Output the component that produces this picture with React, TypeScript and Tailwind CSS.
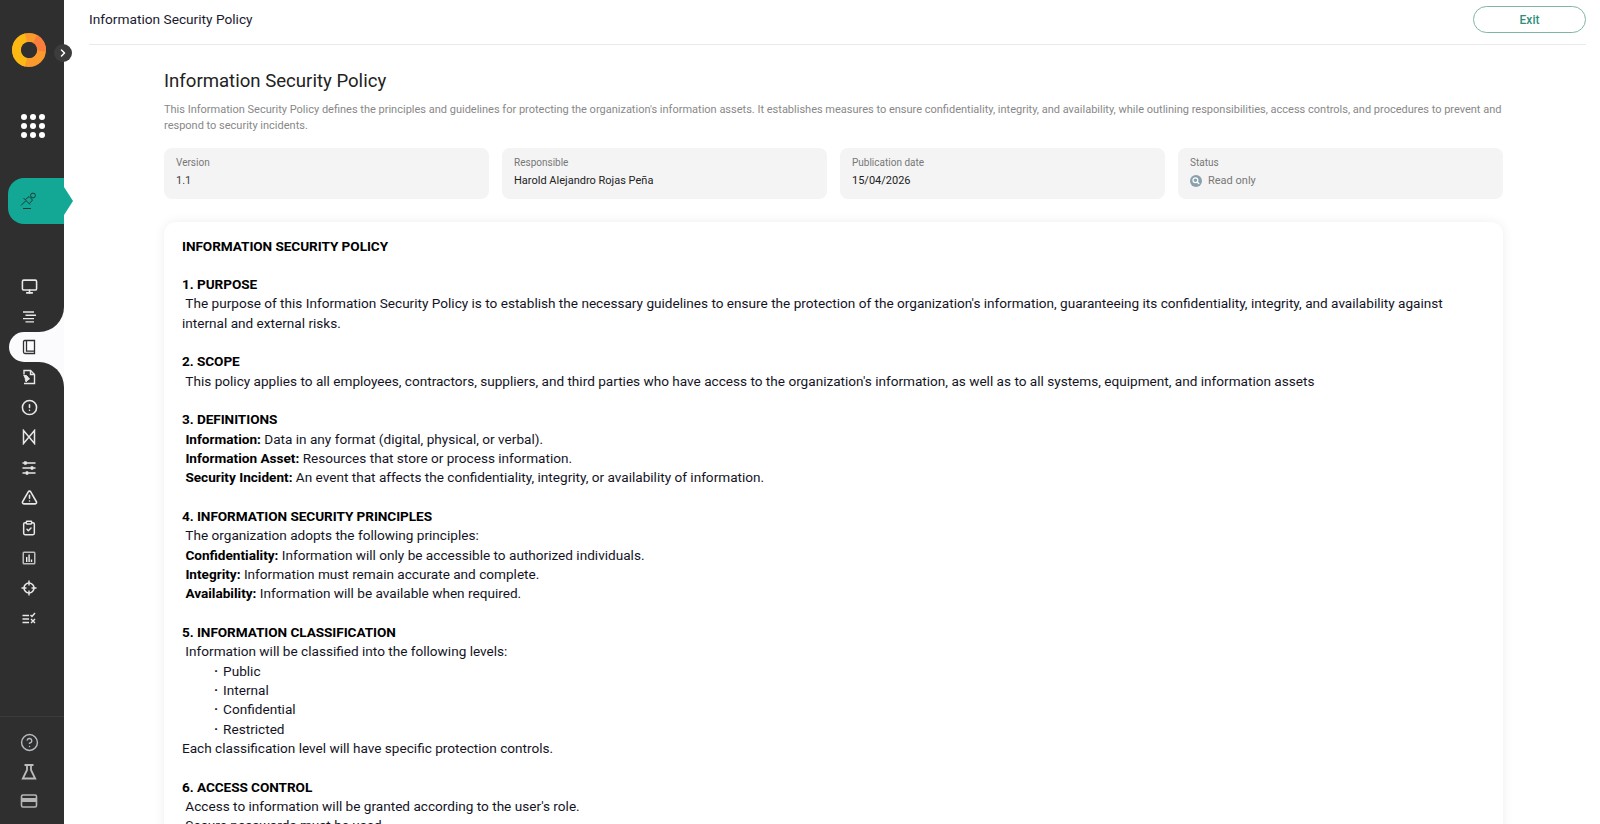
import { ReactNode } from "react";
import {
  ChevronRight,
  CircleAlert,
  CircleHelp,
  ClipboardCheck,
  Monitor,
  TriangleAlert,
} from "lucide-react";

const meta = [
  { label: "Version", value: "1.1", tone: "text-[#444]" },
  { label: "Responsible", value: "Harold Alejandro Rojas Peña", tone: "text-[#222]" },
  { label: "Publication date", value: "15/04/2026", tone: "text-[#222]" },
];

function Logo() {
  return (
    <svg width="34" height="34" viewBox="0 0 34 34" fill="none" strokeWidth="9">
      <circle cx="17" cy="17" r="12.5" stroke="#fb9a2c" />
      <path d="M14 4.9A12.5 12.5 0 0 0 14 29.1" stroke="#fdb913" />
      <path d="M23 6A12.5 12.5 0 0 1 29.4 18" stroke="#fb7d3c" />
      <circle cx="17" cy="17" r="8" fill="#2f2f2f" stroke="none" />
    </svg>
  );
}

function LinesIcon() {
  return (
    <svg width="16" height="16" viewBox="0 0 16 16" stroke="currentColor" strokeWidth="1.4" fill="none">
      <path d="M2 3h11M4.5 6.3H15M2 9.6h11M4.5 12.9H13" />
    </svg>
  );
}

function BookIcon() {
  return (
    <svg width="16" height="16" viewBox="0 0 16 16" stroke="#2f2f2f" strokeWidth="1.3" fill="none">
      <path d="M5 1.5h-1.2c-.8 0-1.3.5-1.3 1.3v10.2c0 .9.6 1.5 1.5 1.5h9.5V1.5H5Z" />
      <path d="M5.5 1.5v10.7h8" />
    </svg>
  );
}

function FileArrowIcon() {
  return (
    <svg width="16" height="16" viewBox="0 0 16 16" stroke="currentColor" strokeWidth="1.4" fill="none">
      <path d="M3 5.5V1.5h6.5l4 4v9H3" />
      <path d="M9.5 1.5v4h4" />
      <path d="M2.5 6.5h3L8.5 10l-2.5 1.5-.8 1.5-1-2.5" fill="currentColor" strokeWidth="1" />
    </svg>
  );
}

function BowtieIcon() {
  return (
    <svg width="16" height="16" viewBox="0 0 16 16" stroke="currentColor" strokeWidth="1.5" fill="none">
      <path d="M2.5 1.5 13.5 14.5V1.5L2.5 14.5Z" />
    </svg>
  );
}

function SlidersIcon() {
  return (
    <svg width="16" height="16" viewBox="0 0 16 16" stroke="currentColor" strokeWidth="1.5" fill="currentColor">
      <path d="M1.5 3h13M1.5 8h13M1.5 13h13" />
      <rect x="3.5" y="1.7" width="2" height="2.6" strokeWidth="0.6" />
      <rect x="10" y="6.7" width="2" height="2.6" strokeWidth="0.6" />
      <rect x="5" y="11.7" width="2" height="2.6" strokeWidth="0.6" />
    </svg>
  );
}

function ChartIcon() {
  return (
    <svg width="16" height="16" viewBox="0 0 16 16">
      <rect x="1.5" y="1.5" width="13" height="13" rx="1.5" fill="#bdbdbd" />
      <rect x="3" y="3" width="10" height="10" fill="#2f2f2f" />
      <path d="M5 7h1.4v5H5zM7.4 4.5h1.4V12H7.4zM9.8 9.5h1.4V12H9.8z" fill="#eee" />
    </svg>
  );
}

function TargetIcon() {
  return (
    <svg width="16" height="16" viewBox="0 0 16 16" stroke="currentColor" fill="none">
      <circle cx="8" cy="8" r="5" strokeWidth="1.6" />
      <path d="M8 0.5v5M8 10.5v5M.5 8h5M10.5 8h5" strokeWidth="1.4" />
    </svg>
  );
}

function ChecklistIcon() {
  return (
    <svg width="16" height="16" viewBox="0 0 16 16" stroke="currentColor" strokeWidth="1.4" fill="none">
      <path d="M1.5 5.5H8M1.5 9H8M1.5 12.5H8" />
      <path d="M9.5 5l1.5 1.5 3-3.5M10 9l4 4M14 9l-4 4" />
    </svg>
  );
}

function FlaskIcon() {
  return (
    <svg width="18" height="18" viewBox="0 0 18 18" stroke="#bdbdbd" strokeWidth="1.8" fill="none">
      <path d="M4.5 2h9M7 2v5L2.8 15.5h12.4L11 7V2" />
    </svg>
  );
}

function CardIcon() {
  return (
    <svg width="18" height="18" viewBox="0 0 18 18">
      <rect x="1.5" y="3" width="15" height="12" rx="1.5" fill="none" stroke="#b5b5b5" strokeWidth="1.6" />
      <rect x="1.5" y="6" width="15" height="4" fill="#b5b5b5" />
    </svg>
  );
}

function PinIcon() {
  return (
    <svg width="18" height="18" viewBox="0 0 18 18" stroke="#1f3a36" strokeWidth="1" fill="none">
      <circle cx="13" cy="3.5" r="2.4" />
      <path d="M1 13.5l4.5-4.5M3.5 6l6.5 6.5M5.5 7.5 9 4.5l3.5 3.5-3 3.5M3 16.5h8" />
    </svg>
  );
}

function NavItem({ children }: { children: ReactNode }) {
  return (
    <div className="flex h-[30.2px] w-[58px] items-center justify-center text-[#e8e8e8]">
      {children}
    </div>
  );
}

function ActiveNavItem() {
  return (
    <div className="relative ml-[9px] flex h-[30px] w-[55px] items-center rounded-l-full bg-[#fbfbfd] pl-[12px]">
      <BookIcon />
      <div className="absolute bottom-full right-0 h-[25px] w-[25px] bg-[#fbfbfd]">
        <div className="h-full w-full rounded-br-[25px] bg-[#2f2f2f]" />
      </div>
      <div className="absolute right-0 top-full h-[25px] w-[25px] bg-[#fbfbfd]">
        <div className="h-full w-full rounded-tr-[25px] bg-[#2f2f2f]" />
      </div>
    </div>
  );
}

function Sidebar() {
  return (
    <aside className="relative flex h-full w-[64px] shrink-0 flex-col bg-[#2f2f2f]">
      <div className="ml-[12px] mt-[33px] h-[34px] w-[34px]">
        <Logo />
      </div>
      <div className="absolute left-[54px] top-[44px] flex h-[18px] w-[18px] items-center justify-center rounded-full bg-[#3c3c3c] text-white">
        <ChevronRight size={12} strokeWidth={3} />
      </div>
      <div className="ml-[21px] mt-[47px] grid w-[24px] grid-cols-3 gap-[3px]">
        {Array.from({ length: 9 }).map((_, i) => (
          <div key={i} className="h-[6px] w-[6px] rounded-full bg-white" />
        ))}
      </div>
      <div className="relative ml-[8px] mt-[40px] flex h-[46px] w-[56px] items-center rounded-l-[16px] bg-[#13a896] pl-[12px]">
        <PinIcon />
        <div className="absolute left-full top-[9px] h-[28px] w-[9px] bg-[#13a896] [clip-path:polygon(0_0,100%_50%,0_100%)]" />
      </div>
      <div className="mt-[47.5px] flex flex-col">
        <NavItem><Monitor size={17} strokeWidth={2.2} /></NavItem>
        <NavItem><LinesIcon /></NavItem>
        <ActiveNavItem />
        <NavItem><FileArrowIcon /></NavItem>
        <NavItem><CircleAlert size={17} strokeWidth={2.2} /></NavItem>
        <NavItem><BowtieIcon /></NavItem>
        <NavItem><SlidersIcon /></NavItem>
        <NavItem><TriangleAlert size={17} strokeWidth={2.2} /></NavItem>
        <NavItem><ClipboardCheck size={16} strokeWidth={2.2} /></NavItem>
        <NavItem><ChartIcon /></NavItem>
        <NavItem><TargetIcon /></NavItem>
        <NavItem><ChecklistIcon /></NavItem>
      </div>
      <div className="mt-auto flex flex-col border-t border-[#3a3a3a] pb-[9px] pt-[10px]">
        <div className="flex h-[30px] w-[58px] items-center justify-center text-[#b5bcc0]">
          <CircleHelp size={19} strokeWidth={1.8} />
        </div>
        <div className="flex h-[30px] w-[58px] items-center justify-center">
          <FlaskIcon />
        </div>
        <div className="flex h-[28px] w-[58px] items-center justify-center">
          <CardIcon />
        </div>
      </div>
    </aside>
  );
}

function H({ children }: { children: ReactNode }) {
  return <p className="font-bold tracking-[-0.06px] text-black">{children}</p>;
}

function Gap() {
  return <p>&nbsp;</p>;
}

function Policy() {
  return (
    <div className="mt-[23px] rounded-t-[12px] bg-white pl-[18px] pr-[18px] pt-[14.5px] text-[13.6px] leading-[19.33px] text-[#14141f] shadow-[0_0_12px_rgba(0,0,0,0.07)]">
      <H>INFORMATION SECURITY POLICY</H>
      <Gap />
      <H>1. PURPOSE</H>
      <p>&nbsp;The purpose of this Information Security Policy is to establish the necessary guidelines to ensure the protection of the organization's information, guaranteeing its confidentiality, integrity, and availability against internal and external risks.</p>
      <Gap />
      <H>2. SCOPE</H>
      <p>&nbsp;This policy applies to all employees, contractors, suppliers, and third parties who have access to the organization's information, as well as to all systems, equipment, and information assets</p>
      <Gap />
      <H>3. DEFINITIONS</H>
      <p>&nbsp;<b className="text-black">Information:</b> Data in any format (digital, physical, or verbal).</p>
      <p>&nbsp;<b className="text-black">Information Asset:</b> Resources that store or process information.</p>
      <p>&nbsp;<b className="text-black">Security Incident:</b> An event that affects the confidentiality, integrity, or availability of information.</p>
      <Gap />
      <H>4. INFORMATION SECURITY PRINCIPLES</H>
      <p>&nbsp;The organization adopts the following principles:</p>
      <p>&nbsp;<b className="text-black">Confidentiality:</b> Information will only be accessible to authorized individuals.</p>
      <p>&nbsp;<b className="text-black">Integrity:</b> Information must remain accurate and complete.</p>
      <p>&nbsp;<b className="text-black">Availability:</b> Information will be available when required.</p>
      <Gap />
      <H>5. INFORMATION CLASSIFICATION</H>
      <p>&nbsp;Information will be classified into the following levels:</p>
      {["Public", "Internal", "Confidential", "Restricted"].map((level) => (
        <p key={level} className="pl-[32px]">
          <span className="mr-[5px] font-bold">·</span>
          {level}
        </p>
      ))}
      <p>Each classification level will have specific protection controls.</p>
      <Gap />
      <H>6. ACCESS CONTROL</H>
      <p>&nbsp;Access to information will be granted according to the user's role.</p>
      <p>&nbsp;Secure passwords must be used.</p>
    </div>
  );
}

export default function App() {
  return (
    <div className="flex h-[824px] w-full overflow-hidden bg-white font-['Roboto',sans-serif]">
      <Sidebar />
      <main className="min-w-0 flex-1 overflow-hidden">
        <header className="ml-[25px] mr-[14px] flex h-[45px] items-center justify-between border-b border-[#eaeaea] pb-[5px]">
          <span className="text-[13.7px] text-[#1a1a2e]">Information Security Policy</span>
          <button
            type="button"
            className="h-[27px] w-[113px] rounded-full border border-[#7fb5a5] text-[12px] font-medium text-[#2f8f78]"
          >
            Exit
          </button>
        </header>
        <div className="ml-[100px] mr-[97px]">
          <h1 className="mt-[24px] text-[18.6px] font-normal leading-[24px] text-[#222]">
            Information Security Policy
          </h1>
          <p className="mt-[9px] text-[11px] leading-[15.5px] text-[#888]">
            This Information Security Policy defines the principles and guidelines for protecting the organization's information assets. It establishes measures to ensure confidentiality, integrity, and availability, while outlining responsibilities, access controls, and procedures to prevent and respond to security incidents.
          </p>
          <div className="mt-[15px] grid grid-cols-4 gap-[13px]">
            {meta.map((item) => (
              <div key={item.label} className="h-[51px] rounded-[8px] bg-[#f4f4f4] px-[12px] pt-[8px]">
                <div className="text-[10px] leading-[14px] text-[#777]">{item.label}</div>
                <div className={`mt-[3px] text-[11px] leading-[16px] ${item.tone}`}>{item.value}</div>
              </div>
            ))}
            <div className="h-[51px] rounded-[8px] bg-[#f4f4f4] px-[12px] pt-[8px]">
              <div className="text-[10px] leading-[14px] text-[#777]">Status</div>
              <div className="mt-[3px] flex items-center gap-[6px] text-[11px] leading-[16px] text-[#777]">
                <svg width="12" height="12" viewBox="0 0 12 12">
                  <circle cx="6" cy="6" r="6" fill="#8ba0ad" />
                  <circle cx="5.4" cy="5.2" r="2.4" fill="none" stroke="#fff" strokeWidth="1.2" />
                  <path d="M7.2 7l2 2" stroke="#fff" strokeWidth="1.4" />
                </svg>
                Read only
              </div>
            </div>
          </div>
          <Policy />
        </div>
      </main>
    </div>
  );
}
